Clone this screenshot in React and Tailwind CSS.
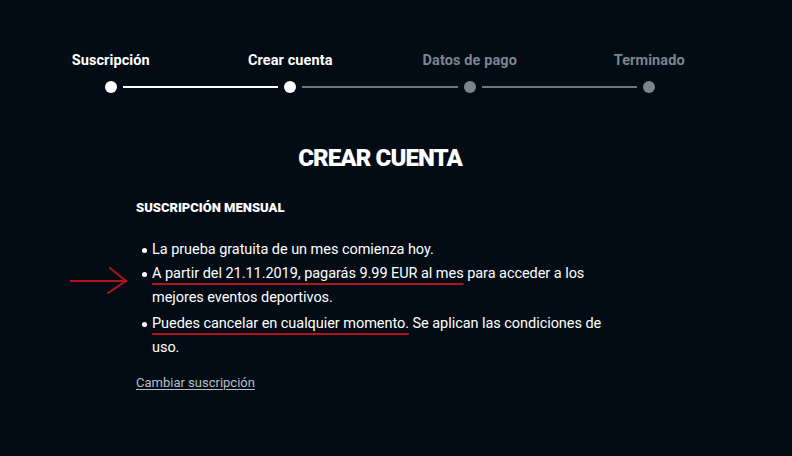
export default function App() {
  const steps = [
    { label: "Suscripción", active: true },
    { label: "Crear cuenta", active: true },
    { label: "Datos de pago", active: false },
    { label: "Terminado", active: false },
  ];
  return (
    <div className="min-h-[456px] w-[792px] bg-[#030c15] text-white" style={{ fontFamily: "Roboto, 'Liberation Sans', sans-serif" }}>
      <div className="w-[760px] pt-[51px]">
        {/* stepper */}
        <div className="mx-auto w-[718px]">
          <div className="grid grid-cols-4">
            {steps.map((s) => (
              <div key={s.label} className={`text-center text-[14.5px] font-bold leading-[20px] tracking-[0.1px] ${s.active ? "text-white" : "text-[#7b858c]"}`}>
                {s.label}
              </div>
            ))}
          </div>
          <div className="mt-[10px] flex items-center px-[84px]">
            <span className="h-[12px] w-[12px] shrink-0 rounded-full bg-white" />
            <span className="mx-[6px] h-[2px] flex-1 bg-white" />
            <span className="h-[12px] w-[12px] shrink-0 rounded-full bg-white" />
            <span className="mx-[6px] h-[2px] flex-1 bg-[#6e777e]" />
            <span className="h-[12px] w-[12px] shrink-0 rounded-full bg-[#7b858c]" />
            <span className="mx-[6px] h-[2px] flex-1 bg-[#6e777e]" />
            <span className="h-[12px] w-[12px] shrink-0 rounded-full bg-[#7b858c]" />
          </div>
        </div>

        {/* content */}
        <div className="mx-auto mt-[50px] w-[488px]">
          <h1 className="text-center text-[24px] font-black uppercase leading-[30px] tracking-[-0.9px]">Crear cuenta</h1>
          <h2 className="mt-[27px] text-[13px] font-black uppercase leading-[16px] tracking-[0px]">Suscripción mensual</h2>
          <ul className="relative mt-[22px] pl-[16px] text-[14.5px] leading-[24px] tracking-[-0.05px]">
            <li className="relative">
              <span className="absolute left-[-10px] top-[10px] h-[5px] w-[5px] rounded-full bg-white" />
              La prueba gratuita de un mes comienza hoy.
            </li>
            <li className="relative">
              <span className="absolute left-[-10px] top-[10px] h-[5px] w-[5px] rounded-full bg-white" />
              <span className="underline decoration-[#b3121f] decoration-2 underline-offset-[5px]">A partir del 21.11.2019, pagarás 9.99 EUR al mes</span>{" "}
              para acceder a los mejores eventos deportivos.
              <svg className="absolute left-[-82px] top-[4px]" width="64" height="32" viewBox="0 0 64 32" fill="none">
                <path d="M0 15 L56 15" stroke="#b3121f" strokeWidth="2" strokeLinecap="round" />
                <path d="M40 2 L56 15 L38 27" stroke="#b3121f" strokeWidth="2" strokeLinecap="round" strokeLinejoin="round" />
              </svg>
            </li>
            <li className="relative mt-[2px]">
              <span className="absolute left-[-10px] top-[10px] h-[5px] w-[5px] rounded-full bg-white" />
              <span className="underline decoration-[#b3121f] decoration-2 underline-offset-[5px]">Puedes cancelar en cualquier momento.</span>{" "}
              Se aplican las condiciones de uso.
            </li>
          </ul>
          <a className="mt-[14px] inline-block text-[13px] leading-[18px] text-[#b6bec4] underline underline-offset-2">Cambiar suscripción</a>
        </div>
      </div>
    </div>
  );
}
